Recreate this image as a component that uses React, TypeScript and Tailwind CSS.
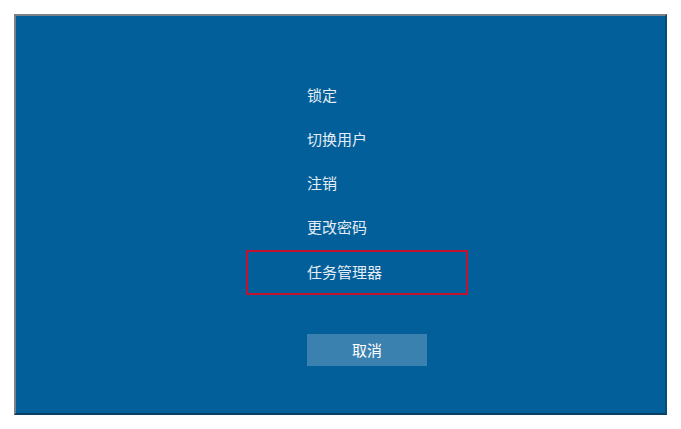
import React from "react";

const items = ["锁定", "切换用户", "注销", "更改密码"];

export default function App() {
  return (
    <div
      className="w-[681px] h-[429px] bg-white pl-[14px] pt-[14px]"
      style={{ fontFamily: '"Microsoft YaHei", "Noto Sans CJK SC", sans-serif' }}
    >
      <div className="w-[653px] h-[401px] bg-[#025f99] border-l-2 border-t-2 border-l-[#7b8186] border-t-[#7b8186] border-r-2 border-b-2 border-r-[#0c4a73] border-b-[#0a3f63]">
        <div className="ml-[230px] mt-[58px] w-[222px] flex flex-col">
          {items.map((t) => (
            <div key={t} className="h-[44px] flex items-center pl-[61px] pb-[1px] text-[15px] text-[#e4edf5]">
              {t}
            </div>
          ))}
          <div className="h-[45px] flex items-center pl-[59px] text-[15px] text-[#e4edf5] border-2 border-[#c3122f]">
            任务管理器
          </div>
          <div className="ml-[61px] mt-[39px] w-[120px] h-[32px] bg-[#3b81b0] flex items-center justify-center text-[15px] text-white">
            取消
          </div>
        </div>
      </div>
    </div>
  );
}
